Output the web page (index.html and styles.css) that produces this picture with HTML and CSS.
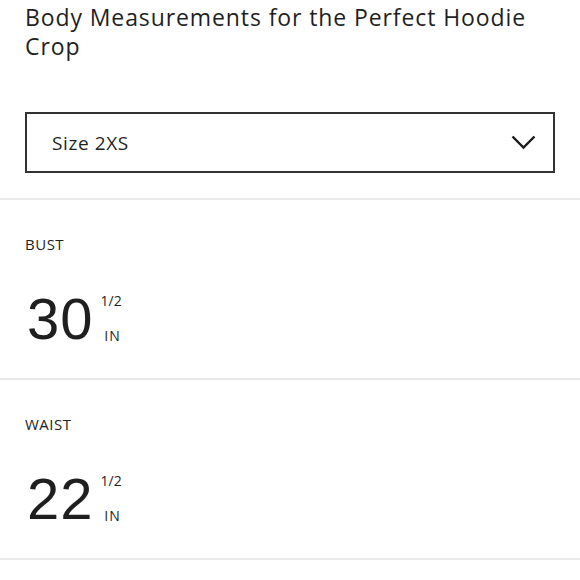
FILE: index.html
```html
<!DOCTYPE html>
<html lang="en">
<head>
    <meta charset="UTF-8">
    <title>Size Guide</title>
    <link rel="stylesheet" href="styles.css">
</head>
<body>
    <div class="size-guide">
        <h2 class="guide-title">Body Measurements for the Perfect Hoodie Crop</h2>

        <div class="size-select">
            <span class="size-value">Size 2XS</span>
            <svg class="chevron" width="25" height="15" viewBox="0 0 25 15">
                <path d="M1.5 1.5 L12.5 12.5 L23.5 1.5" fill="none" stroke="#1a1a1a" stroke-width="2.4"/>
            </svg>
        </div>
    </div>

    <!-- MEASUREMENTS -->
    <div class="measure-row">
        <div class="measure-label">BUST</div>
        <div class="measure-value">
            <span class="measure-num">30</span>
            <span class="measure-unit">
                <span class="measure-frac">1/2</span>
                <span class="measure-in">IN</span>
            </span>
        </div>
    </div>

    <div class="measure-row">
        <div class="measure-label">WAIST</div>
        <div class="measure-value">
            <span class="measure-num">22</span>
            <span class="measure-unit">
                <span class="measure-frac">1/2</span>
                <span class="measure-in">IN</span>
            </span>
        </div>
    </div>
</body>
</html>
```

FILE: styles.css
```css
body {
    margin: 0;
    background: #fff;
    color: #1f1f1f;
    font-family: "Open Sans", "Liberation Sans", sans-serif;
}

.size-guide {
    padding: 3px 25px 25px;
    border-bottom: 2px solid #e9e9e9;
}

.guide-title {
    margin: 0;
    font-size: 23px;
    font-weight: 400;
    line-height: 29px;
    letter-spacing: 0.9px;
}

.size-select {
    display: flex;
    align-items: center;
    justify-content: space-between;
    height: 57px;
    margin-top: 51px;
    padding: 0 17px 0 25px;
    border: 2px solid #333;
}

.size-value {
    font-size: 19px;
    letter-spacing: 0.6px;
}

.chevron {
    display: block;
}

.measure-row {
    height: 180px;
    padding: 0 25px;
    border-bottom: 2px solid #e9e9e9;
    box-sizing: border-box;
}

.measure-label {
    padding-top: 34px;
    font-size: 15px;
    letter-spacing: 0.5px;
}

.measure-value {
    display: flex;
    margin-top: 44px;
}

.measure-num {
    font-family: "Liberation Sans", sans-serif;
    font-size: 58px;
    line-height: 42px;
    letter-spacing: 1px;
    margin-left: 2px;
}

.measure-unit {
    display: flex;
    flex-direction: column;
    justify-content: space-between;
    align-items: center;
    margin: -4px 0 -3px 7px;
    font-size: 14px;
    line-height: 14px;
}

.measure-in {
    letter-spacing: 1px;
    margin-left: 3px;
}
```
